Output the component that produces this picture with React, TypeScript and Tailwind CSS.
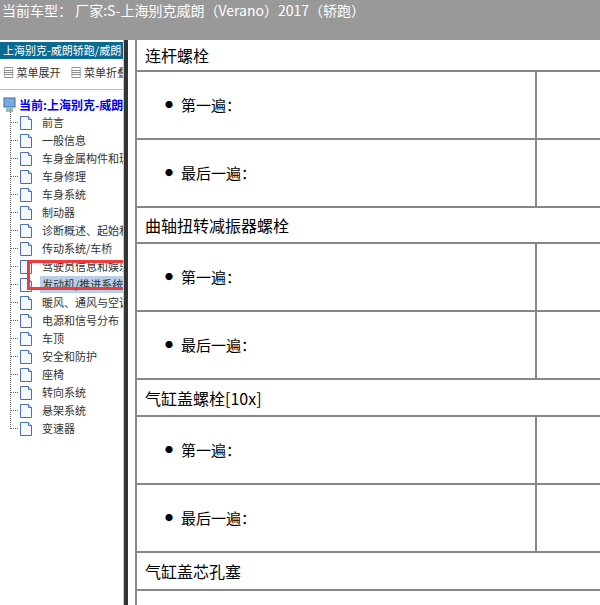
import React from "react";

const items = ["前言","一般信息","车身金属构件和玻璃","车身修理","车身系统","制动器","诊断概述、起始和诊断","传动系统/车桥","驾驶员信息和娱乐系统","发动机/推进系统","暖风、通风与空调系统","电源和信号分布","车顶","安全和防护","座椅","转向系统","悬架系统","变速器"];

const Doc = () => (
  <svg width="16" height="16" viewBox="0 0 16 16" className="shrink-0">
    <path d="M2.5 1.5h8l3 3v10h-11z" fill="#f4f8ff" stroke="#4a6fb5" />
    <path d="M10.5 1.5v3h3" fill="#dfe8f8" stroke="#4a6fb5" />
  </svg>
);

const Section = ({ title, h = 32 }: { title: string; h?: number }) => (
  <>
    <div className="flex items-center pl-[8px] text-[16px] text-black border-b-2 border-[#888]" style={{ height: h }}>{title}</div>
    {["第一遍：", "最后一遍："].map((t) => (
      <div key={t} className="h-[68px] grid grid-cols-[400px_1fr] border-b-2 border-[#888]">
        <div className="border-r-2 border-[#888] flex items-center pl-[28px] text-[15px]">
          <span className="mr-[8px] text-[8px]">●</span>{t}
        </div>
        <div />
      </div>
    ))}
  </>
);

export default function App() {
  return (
    <div className="w-[600px] h-[605px] overflow-hidden bg-white flex flex-col" style={{ fontFamily: '"Noto Sans CJK SC", sans-serif' }}>
      <div className="h-[40px] bg-[#999] text-white text-[14px] pl-[2px] shrink-0">当前车型： 厂家:S-上海别克威朗（Verano）2017（轿跑）</div>
      <div className="flex flex-1 min-h-0">
        <div className="w-[124px] shrink-0 overflow-hidden text-[11px] text-[#333] border-r border-[#ccc]">
          <div className="mt-[2px] h-[17px] bg-[#0a6a92] text-white px-[3px] whitespace-nowrap leading-[17px]">上海别克-威朗轿跑/威朗</div>
          <div className="flex gap-[10px] px-[3px] mt-[5px] whitespace-nowrap">
            <span className="shrink-0">▤ 菜单展开</span><span className="shrink-0">▤ 菜单折叠</span>
          </div>
          <div className="border-t border-[#bbb] mt-[8px]" />
          <div className="flex items-center gap-[2px] mt-[6px] pl-[3px] whitespace-nowrap">
            <svg width="14" height="16" viewBox="0 0 14 16" className="shrink-0"><rect x="1" y="1" width="11" height="9" fill="#7aa8e0" stroke="#3c6aa8"/><rect x="3" y="11" width="7" height="4" fill="#9bb"/></svg>
            <span className="text-[#0000ee] font-bold text-[12px] shrink-0">当前:上海别克-威朗轿跑</span>
          </div>
          <div className="relative ml-[10px] w-[300px]">
            <div className="absolute left-0 top-[-4px] bottom-[9px] border-l border-dotted border-[#666]" />
            {items.map((it) => {
              const sel = it === "发动机/推进系统";
              return (
                <div key={it} className="h-[18px] flex items-center whitespace-nowrap">
                  <div className="w-[8px] shrink-0 border-t border-dotted border-[#666]" />
                  <Doc />
                  <span className={`ml-[6px] px-[2px] shrink-0 ${sel ? "bg-[#b9cfe8] text-[#333]" : ""}`}>{it}</span>
                </div>
              );
            })}
            <div className="absolute left-[17px] top-[146px] w-[107px] h-[30px] border-[3px] border-[#ef3b3b]" />
          </div>
        </div>
        <div className="w-[4px] bg-[#333] shrink-0" />
        <div className="w-[7px] shrink-0" />
        <div className="flex-1 min-w-0 border-l-2 border-[#888] overflow-hidden">
          <div className="w-[520px]">
            <Section title="连杆螺栓" />
            <Section title="曲轴扭转减振器螺栓" h={36} />
            <Section title="气缸盖螺栓[10x]" h={37} />
            <div className="h-[38px] flex items-center pl-[8px] text-[16px] border-b-2 border-[#888]">气缸盖芯孔塞</div>
          </div>
        </div>
      </div>
    </div>
  );
}
